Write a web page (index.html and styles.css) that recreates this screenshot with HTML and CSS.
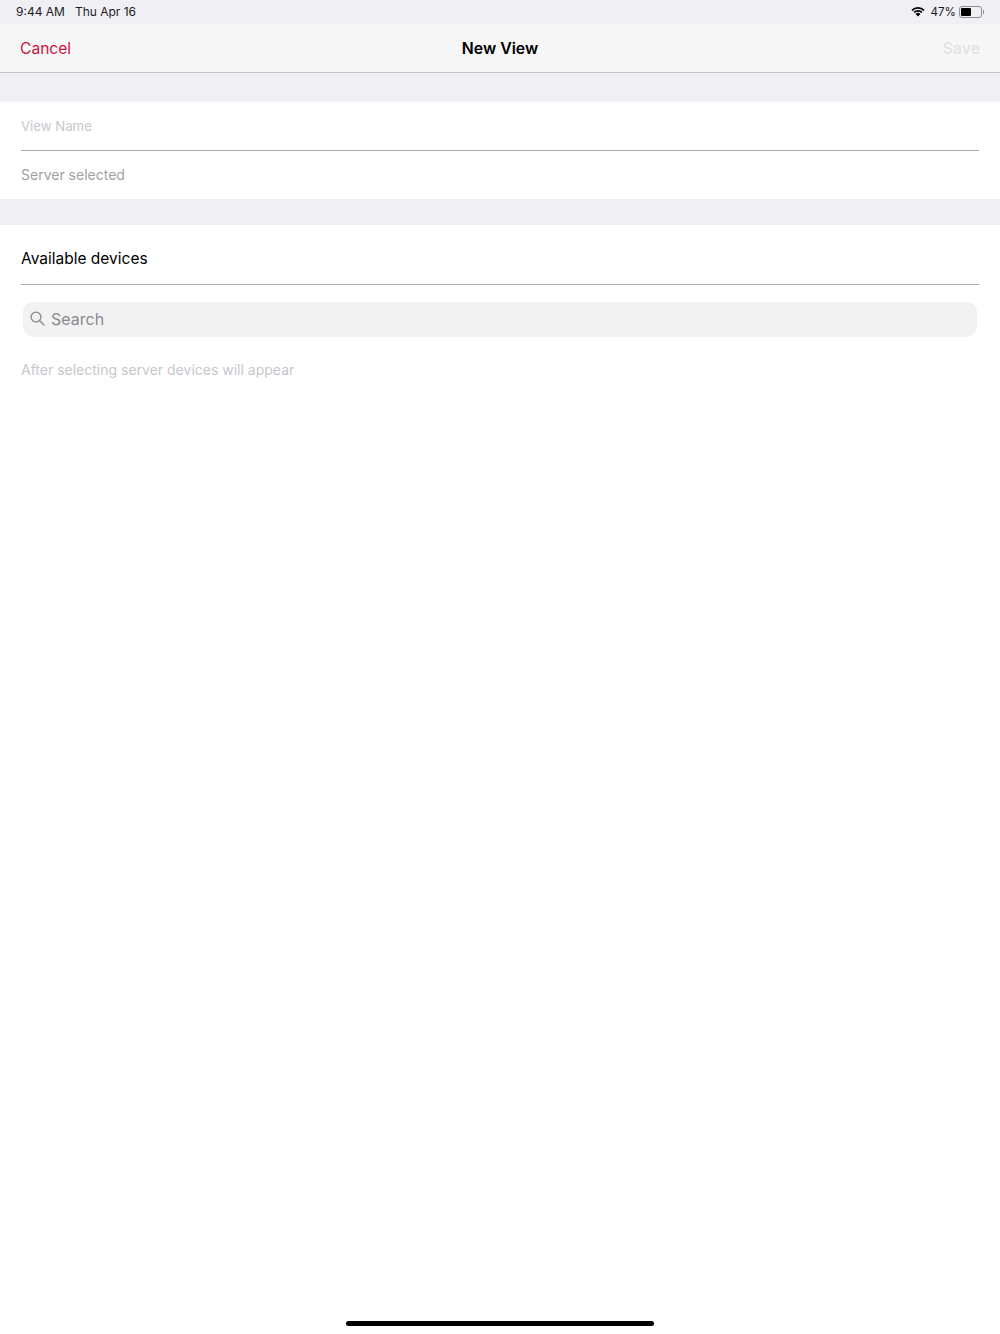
FILE: index.html
```html
<!DOCTYPE html>
<html lang="en">
<head>
    <meta charset="UTF-8">
    <title>New View</title>
    <link rel="stylesheet" href="styles.css">
</head>
<body>
    <div class="page">
        <div class="status-bar">
            <div class="status-left">
                <span>9:44 AM</span>
                <span>Thu Apr 16</span>
            </div>
            <div class="status-right">
                <svg class="wifi" width="14" height="11" viewBox="0 0 15 11">
                    <path d="M0.4 3.6 A10 10 0 0 1 14.6 3.6 L13.3 5 A8.2 8.2 0 0 0 1.7 5 Z" fill="#000"/>
                    <path d="M2.6 5.9 A7 7 0 0 1 12.4 5.9 L11.1 7.2 A5.2 5.2 0 0 0 3.9 7.2 Z" fill="#000"/>
                    <path d="M4.9 8.2 A3.7 3.7 0 0 1 10.1 8.2 L7.5 10.9 Z" fill="#000"/>
                </svg>
                <span>47%</span>
                <div class="battery"><div class="battery-level"></div></div>
                <div class="battery-tip"></div>
            </div>
        </div>

        <header class="nav-bar">
            <span class="nav-cancel">Cancel</span>
            <h1 class="nav-title">New View</h1>
            <span class="nav-save">Save</span>
        </header>

        <div class="spacer spacer-top"></div>

        <section class="form-group">
            <div class="form-row form-row-line"><span class="placeholder">View Name</span></div>
            <div class="form-row form-row-last"><span class="server">Server selected</span></div>
        </section>

        <div class="spacer spacer-mid"></div>

        <section class="devices">
            <h2 class="devices-title">Available devices</h2>
            <div class="search-box">
                <svg class="search-icon" width="15" height="15" viewBox="0 0 15 15">
                    <circle cx="6" cy="6" r="4.9" fill="none" stroke="#8a8a8e" stroke-width="1.3"/>
                    <path d="M9.6 9.6 L14 14" stroke="#8a8a8e" stroke-width="1.4" stroke-linecap="round"/>
                </svg>
                <span>Search</span>
            </div>
            <p class="devices-empty">After selecting server devices will appear</p>
        </section>

        <div class="home-indicator"></div>
    </div>
</body>
</html>
```

FILE: styles.css
```css
* {
    box-sizing: border-box;
    margin: 0;
    padding: 0;
}

body {
    font-family: Inter, "Liberation Sans", sans-serif;
    background: #fff;
    color: #000;
}

.page {
    height: 1334px;
    display: flex;
    flex-direction: column;
}

/* Status bar */
.status-bar {
    height: 24px;
    background: #efeff4;
    display: flex;
    justify-content: space-between;
    align-items: center;
    padding: 0 16px 1px 16px;
    font-size: 12px;
    color: #1c1c1e;
}

.status-left {
    display: flex;
    gap: 10px;
}

.status-right {
    display: flex;
    align-items: center;
}

.wifi {
    margin-right: 6px;
}

.status-right span {
    font-size: 11.6px;
}

.battery {
    width: 23px;
    height: 12px;
    margin-left: 3px;
    padding: 1px;
    border: 1px solid #8e8e93;
    border-radius: 3px;
}

.battery-level {
    width: 10px;
    height: 100%;
    background: #000;
    border-radius: 1px;
}

.battery-tip {
    width: 1px;
    height: 4px;
    background: #8e8e93;
    margin-left: 1px;
}

/* Nav bar */
.nav-bar {
    height: 49px;
    background: #f7f7f8;
    border-bottom: 1px solid #c4c4c6;
    display: grid;
    grid-template-columns: 1fr auto 1fr;
    align-items: center;
    padding: 0 20px;
    font-size: 15.8px;
}

.nav-cancel {
    color: #c8143c;
    font-size: 15.6px;
}

.nav-title {
    font-size: 15.8px;
    font-weight: 600;
}

.nav-save {
    color: #e3e3e5;
    font-weight: 600;
    text-align: right;
}

.spacer {
    background: #efeff4;
}

.spacer-top {
    height: 29px;
}

.spacer-mid {
    height: 26px;
}

/* Form */
.form-group {
    padding: 0 21px;
}

.form-row {
    height: 49px;
    display: flex;
    align-items: center;
    font-size: 14px;
}

.form-row-line {
    border-bottom: 1px solid #a9a9a9;
    font-size: 13.2px;
    padding-bottom: 1px;
}

.form-row-last {
    height: 48px;
    padding-bottom: 1px;
}

.placeholder {
    color: #c7c7cd;
}

.server {
    color: #a0a0a3;
}

/* Devices */
.devices {
    padding: 0 21px;
    flex: 1;
}

.devices-title {
    height: 60px;
    padding-top: 7px;
    border-bottom: 1px solid #b0b0b0;
    display: flex;
    align-items: center;
    font-size: 15.5px;
    font-weight: 400;
}

.search-box {
    height: 35px;
    margin: 17px 2px 0;
    padding: 0 0 2px 7px;
    background: #f2f2f3;
    border-radius: 10px;
    display: flex;
    align-items: center;
    gap: 6px;
    font-size: 16px;
    color: #8a8a8e;
}

.devices-empty {
    margin-top: 24px;
    font-size: 14px;
    color: #c7c7cd;
}

.home-indicator {
    width: 308px;
    height: 5px;
    margin: 0 auto 8px;
    background: #000;
    border-radius: 3px;
}
```
